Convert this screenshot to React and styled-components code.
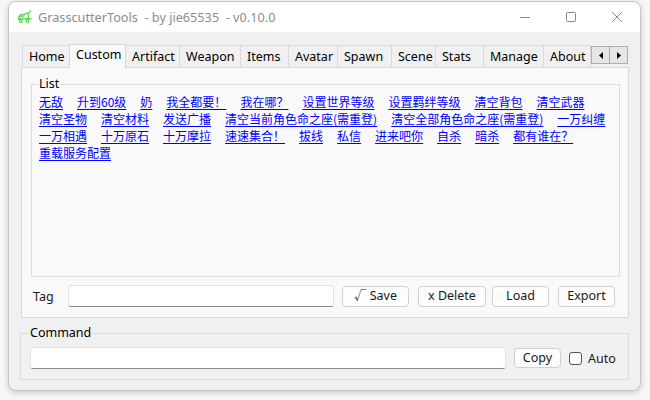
import React from "react";
import styled, { createGlobalStyle } from "styled-components";

const GlobalStyle = createGlobalStyle`
  html, body {
    margin: 0;
    padding: 0;
    background: #ffffff;
  }
  body {
    font-family: "Noto Sans", "Noto Sans CJK SC", sans-serif;
    font-size: 12px;
  }
`;

const tabs = [
  { name: "Home", w: 48 },
  { name: "Custom", w: 57 },
  { name: "Artifact", w: 55 },
  { name: "Weapon", w: 62 },
  { name: "Items", w: 49 },
  { name: "Avatar", w: 50 },
  { name: "Spawn", w: 55 },
  { name: "Scene", w: 45 },
  { name: "Stats", w: 49 },
  { name: "Manage", w: 61 },
  { name: "About", w: 48 },
];

const commands = [
  "无敌", "升到60级", "奶", "我全都要！", "我在哪？", "设置世界等级", "设置羁绊等级",
  "清空背包", "清空武器", "清空圣物", "清空材料", "发送广播",
  "清空当前角色命之座(需重登)", "清空全部角色命之座(需重登)", "一万纠缠",
  "一万相遇", "十万原石", "十万摩拉", "速速集合！", "拔线", "私信", "进来吧你",
  "自杀", "暗杀", "都有谁在？", "重载服务配置",
];

function App() {
  const [active, setActive] = React.useState("Custom");
  const [auto, setAuto] = React.useState(false);

  return (
    <>
      <GlobalStyle />
      <Page>
        <Window>
          <TitleBar>
            <AppIcon viewBox="0 0 16 14">
              <path d="M2 9 V6 H7 L9 3 H12 V9" />
              <path d="M12 3 L14.5 0.8" />
              <path d="M3 6 L4.5 4 H7" />
              <path d="M1 9 H15" />
              <circle cx="4" cy="11.3" r="1.5" />
              <circle cx="11" cy="11.3" r="1.5" />
            </AppIcon>
            <Title>GrasscutterTools  - by jie65535  - v0.10.0</Title>
            <Controls>
              <CtrlButton>
                <svg width="12" height="12" viewBox="0 0 12 12">
                  <path d="M1 6.5 H11" />
                </svg>
              </CtrlButton>
              <CtrlButton>
                <svg width="12" height="12" viewBox="0 0 12 12">
                  <rect x="1.5" y="1.5" width="9" height="9" rx="0.8" />
                </svg>
              </CtrlButton>
              <CtrlButton>
                <svg width="12" height="12" viewBox="0 0 12 12">
                  <path d="M1 1 L11 11 M11 1 L1 11" />
                </svg>
              </CtrlButton>
            </Controls>
          </TitleBar>

          <Body>
            <TabStrip>
              {tabs.map((t) => (
                <Tab
                  key={t.name}
                  $w={t.w}
                  $active={t.name === active}
                  onClick={() => setActive(t.name)}
                >
                  {t.name}
                </Tab>
              ))}
              <Scroller>
                <ScrollBtn>
                  <svg width="4" height="7" viewBox="0 0 4 7">
                    <path d="M4 0 V7 L0 3.5 Z" />
                  </svg>
                </ScrollBtn>
                <ScrollBtn>
                  <svg width="4" height="7" viewBox="0 0 4 7">
                    <path d="M0 0 V7 L4 3.5 Z" />
                  </svg>
                </ScrollBtn>
              </Scroller>
            </TabStrip>

            <Panel>
              <ListGroup>
                <Legend>List</Legend>
                <Links>
                  {commands.map((c) => (
                    <CmdLink key={c} href="#" onClick={(e) => e.preventDefault()}>
                      {c}
                    </CmdLink>
                  ))}
                </Links>
              </ListGroup>

              <TagRow>
                <Label>Tag</Label>
                <TextBox $w={266} />
                <Button $w={67}>√ Save</Button>
                <Button $w={68} $ml={1}>x Delete</Button>
                <Button $w={57} $ml={-2}>Load</Button>
                <Button $w={57} $ml={1}>Export</Button>
              </TagRow>
            </Panel>

            <CommandGroup>
              <Legend>Command</Legend>
              <CommandRow>
                <TextBox $w={476} $h={22} />
                <Button $w={47} $h={20}>Copy</Button>
                <CheckLabel>
                  <Check checked={auto} onChange={() => setAuto(!auto)} />
                  Auto
                </CheckLabel>
              </CommandRow>
            </CommandGroup>
          </Body>
        </Window>
      </Page>
    </>
  );
}

const Page = styled.div`
  width: 650px;
  height: 400px;
  padding: 1px 0 0 8px;
  box-sizing: border-box;
  background: #f7f7f7;
`;

const Window = styled.div`
  width: 633px;
  height: 390px;
  box-sizing: border-box;
  border: 1px solid #c4c4c4;
  border-radius: 8px;
  overflow: hidden;
  display: flex;
  flex-direction: column;
  background: #f0f0f0;
  box-shadow: 0 2px 6px rgba(0, 0, 0, 0.18);
`;

const TitleBar = styled.div`
  height: 30px;
  flex-shrink: 0;
  background: #ffffff;
  display: flex;
  align-items: center;
  padding-left: 8px;
`;

const AppIcon = styled.svg`
  width: 15px;
  height: 14px;
  fill: none;
  stroke: #3fd43f;
  stroke-width: 1.2;
  stroke-linecap: round;
  stroke-linejoin: round;
`;

const Title = styled.span`
  margin-left: 6px;
  white-space: pre;
  color: #8c8c8c;
  font-family: "Noto Sans", "Noto Sans CJK SC", sans-serif;
  font-size: 12.7px;
`;

const Controls = styled.div`
  margin-left: auto;
  display: flex;
`;

const CtrlButton = styled.div`
  width: 46px;
  height: 30px;
  display: flex;
  align-items: center;
  justify-content: center;
  svg {
    fill: none;
    stroke: #8a8a8a;
    stroke-width: 1;
  }
`;

const Body = styled.div`
  flex: 1;
  display: flex;
  flex-direction: column;
  padding: 12px 11px 0 12px;
`;

const TabStrip = styled.div`
  display: flex;
  align-items: flex-end;
  height: 24px;
  padding-left: 2px;
  position: relative;
  z-index: 1;
`;

const Tab = styled.div`
  box-sizing: border-box;
  width: ${(p) => p.$w}px;
  height: ${(p) => (p.$active ? 25 : 23)}px;
  padding: ${(p) => (p.$active ? "2px 0 0 6px" : "3px 0 0 6px")};
  background: ${(p) => (p.$active ? "#f9f9f9" : "#f0f0f0")};
  border: 1px solid #dadada;
  border-bottom: ${(p) => (p.$active ? "none" : "1px solid #dadada")};
  margin-left: -1px;
  color: #000;
  font-size: 12.5px;
  line-height: 16px;
  white-space: nowrap;
  cursor: default;
  ${(p) => p.$active && "position: relative; z-index: 2; margin-bottom: -1px;"}
`;

const Scroller = styled.div`
  display: flex;
  align-self: flex-start;
  margin-top: 2px;
`;

const ScrollBtn = styled.div`
  width: 19px;
  height: 18px;
  box-sizing: border-box;
  background: #e6e6e6;
  border: 1px solid #adadad;
  margin-left: -1px;
  display: flex;
  align-items: center;
  justify-content: center;
  &:first-child {
    margin-left: 0;
  }
  svg {
    fill: #000;
  }
`;

const Panel = styled.div`
  height: 251px;
  box-sizing: border-box;
  border: 1px solid #dadada;
  background: #f9f9f9;
  margin-top: -1px;
  display: flex;
  flex-direction: column;
  padding: 8px 8px 10px 9px;
`;

const ListGroup = styled.fieldset`
  flex: 1;
  margin: 0;
  min-width: 0;
  padding: 1px 7px 0 7px;
  border: 1px solid #dcdcdc;
`;

const Legend = styled.legend`
  padding: 0 1px;
  margin-left: -1px;
  font-size: 12.5px;
  line-height: 16px;
  color: #000;
`;

const Links = styled.div`
  display: flex;
  flex-wrap: wrap;
  column-gap: 14px;
  max-width: 576px;
`;

const CmdLink = styled.a`
  font-family: "Noto Sans CJK SC", sans-serif;
  font-size: 12px;
  line-height: 17px;
  color: #0000ff;
  text-decoration: underline;
  text-underline-offset: 2px;
  white-space: nowrap;
`;

const TagRow = styled.div`
  display: flex;
  align-items: center;
  gap: 8px;
  margin-top: 8px;
  height: 22px;
`;

const Label = styled.span`
  width: 25px;
  padding-left: 2px;
  margin-right: 2px;
  font-size: 12.5px;
  color: #1a1a1a;
`;

const TextBox = styled.input.attrs({ type: "text" })`
  box-sizing: border-box;
  width: ${(p) => p.$w}px;
  height: ${(p) => p.$h || 22}px;
  margin: 0;
  padding: 0 4px;
  background: #ffffff;
  border: 1px solid #e3e3e3;
  border-bottom: 1px solid #8a8a8a;
  border-radius: 3px;
  outline: none;
  font-family: "Noto Sans", sans-serif;
  font-size: 12px;
`;

const Button = styled.button`
  box-sizing: border-box;
  width: ${(p) => p.$w}px;
  height: ${(p) => p.$h || 21}px;
  margin: 0 0 0 ${(p) => p.$ml || 0}px;
  padding: 0;
  background: #fdfdfd;
  border: 1px solid #d0d0d0;
  border-radius: 4px;
  font-family: "Noto Sans", "Noto Sans CJK SC", sans-serif;
  font-size: 12.5px;
  color: #1a1a1a;
  line-height: 1;
`;

const CommandGroup = styled.fieldset`
  margin: 7px 0 0 -1px;
  padding: 0 9px 9px 9px;
  min-width: 0;
  border: 1px solid #dcdcdc;
  height: 55px;
  box-sizing: border-box;
`;

const CommandRow = styled.div`
  display: flex;
  align-items: center;
  gap: 8px;
  margin-top: 6px;
`;

const CheckLabel = styled.label`
  display: flex;
  align-items: center;
  gap: 6px;
  font-size: 12.5px;
  color: #1a1a1a;
`;

const Check = styled.input.attrs({ type: "checkbox" })`
  appearance: none;
  width: 13px;
  height: 13px;
  margin: 0;
  border: 1px solid #555;
  border-radius: 3px;
  background: #fff;
`;

export default App;
